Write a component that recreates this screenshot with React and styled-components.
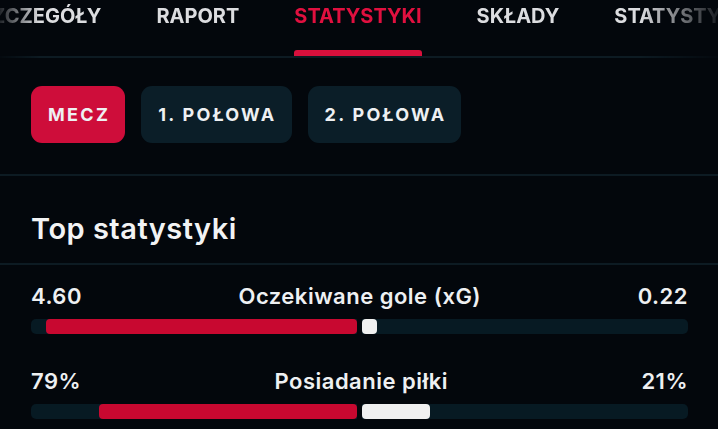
import React, { useState } from "react";
import styled, { createGlobalStyle } from "styled-components";

const GlobalStyle = createGlobalStyle`
  html, body {
    margin: 0;
    padding: 0;
    background: #03070c;
  }
  body {
    font-family: Inter, "Noto Sans", sans-serif;
    color: #eceef0;
  }
`;

const tabs = ["SZCZEGÓŁY", "RAPORT", "STATYSTYKI", "SKŁADY", "STATYSTYKI ZAWODNIKÓW"];
const periods = ["MECZ", "1. POŁOWA", "2. POŁOWA"];
const stats = [
  { home: "4.60", away: "0.22", label: "Oczekiwane gole (xG)", h: 4.6, a: 0.22 },
  { home: "79%", away: "21%", label: "Posiadanie piłki", h: 79, a: 21 },
];

export default function App() {
  const [activeTab, setActiveTab] = useState(2);
  const [period, setPeriod] = useState(0);

  return (
    <Page>
      <GlobalStyle />
      <TabBar>
        <TabStrip>
          {tabs.map((t, i) => (
            <Tab key={t} $active={activeTab === i} onClick={() => setActiveTab(i)}>
              <span>{t}</span>
              <Indicator $active={activeTab === i} />
            </Tab>
          ))}
        </TabStrip>
      </TabBar>

      <Periods>
        {periods.map((p, i) => (
          <PeriodButton key={p} $active={period === i} onClick={() => setPeriod(i)}>
            {p}
          </PeriodButton>
        ))}
      </Periods>

      <Heading>Top statystyki</Heading>

      <StatList>
        {stats.map((s) => {
          const total = s.h + s.a;
          return (
            <StatRow key={s.label}>
              <Labels>
                <span>{s.home}</span>
                <span>{s.label}</span>
                <span>{s.away}</span>
              </Labels>
              <Bars>
                <Track $side="home">
                  <Fill $side="home" style={{ width: `${(s.h / total) * 100}%` }} />
                </Track>
                <Track $side="away">
                  <Fill $side="away" style={{ width: `${(s.a / total) * 100}%` }} />
                </Track>
              </Bars>
            </StatRow>
          );
        })}
      </StatList>
    </Page>
  );
}

const Page = styled.div`
  width: 718px;
  height: 429px;
  overflow: hidden;
  background: #03070c;
`;

const TabBar = styled.div`
  height: 56px;
  border-bottom: 2px solid #0d1b23;
  overflow: hidden;
  -webkit-mask-image: linear-gradient(90deg, rgba(0,0,0,0.15) 0px, #000 40px, #000 640px, rgba(0,0,0,0.1) 718px);
  mask-image: linear-gradient(90deg, rgba(0,0,0,0.15) 0px, #000 40px, #000 640px, rgba(0,0,0,0.1) 718px);
`;

const TabStrip = styled.div`
  display: flex;
  gap: 55px;
  margin-left: -21px;
  height: 100%;
  white-space: nowrap;
`;

const Tab = styled.div`
  display: flex;
  flex-direction: column;
  height: 100%;
  font-size: 20px;
  font-weight: 700;
  color: ${(p) => (p.$active ? "#e0103f" : "#dcdde0")};
  span {
    padding-top: 4px;
    line-height: 24px;
  }
`;

const Indicator = styled.div`
  margin-top: auto;
  height: 6px;
  border-radius: 3px 3px 0 0;
  background: ${(p) => (p.$active ? "#d8103c" : "transparent")};
`;

const Periods = styled.div`
  display: flex;
  gap: 16px;
  padding: 28px 31px 31px;
  border-bottom: 2px solid #0d1b23;
`;

const PeriodButton = styled.div`
  height: 57px;
  padding: 0 15px 0 17px;
  display: flex;
  align-items: center;
  border-radius: 11px;
  font-size: 18px;
  font-weight: 700;
  letter-spacing: 2.3px;
  color: #eef0f2;
  background: ${(p) => (p.$active ? "#ce0d3a" : "#0b1e28")};
`;

const Heading = styled.h2`
  margin: 0;
  height: 89px;
  box-sizing: border-box;
  padding: 35px 31px 0;
  font-size: 29px;
  line-height: 35px;
  font-weight: 600;
  letter-spacing: 0.5px;
  color: #f2f3f4;
  border-bottom: 2px solid #0d1b23;
`;

const StatList = styled.div`
  display: flex;
  flex-direction: column;
  padding: 18px 30px 0 31px;
  gap: 34px;
`;

const StatRow = styled.div`
  display: flex;
  flex-direction: column;
  gap: 10px;
`;

const Labels = styled.div`
  display: flex;
  justify-content: space-between;
  align-items: center;
  font-size: 22px;
  font-weight: 600;
  letter-spacing: 0.5px;
  line-height: 26px;
  color: #eef0f2;
`;

const Bars = styled.div`
  display: flex;
  gap: 5px;
  height: 15px;
`;

const Track = styled.div`
  flex: 1;
  display: flex;
  justify-content: ${(p) => (p.$side === "home" ? "flex-end" : "flex-start")};
  background: #071a23;
  border-radius: ${(p) => (p.$side === "home" ? "5px 0 0 5px" : "0 5px 5px 0")};
`;

const Fill = styled.div`
  height: 100%;
  border-radius: 4px;
  background: ${(p) => (p.$side === "home" ? "#c80830" : "#f0f0f0")};
`;
